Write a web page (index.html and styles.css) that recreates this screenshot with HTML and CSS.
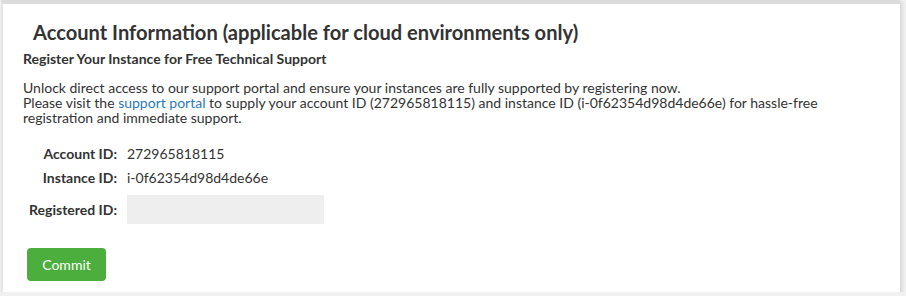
FILE: index.html
```html
<!DOCTYPE html>
<html lang="en">
<head>
    <meta charset="UTF-8">
    <title>Account Information</title>
    <link rel="stylesheet" href="styles.css">
</head>
<body>
    <div class="panel">
        <h2 class="panel-title">Account Information (applicable for cloud environments only)</h2>
        <h4 class="panel-subtitle">Register Your Instance for Free Technical Support</h4>
        <p class="panel-text">
            Unlock direct access to our support portal and ensure your instances are fully supported by registering now.<br>
            Please visit the <a href="#">support portal</a> to supply your account ID (272965818115) and instance ID (i-0f62354d98d4de66e) for hassle-free registration and immediate support.
        </p>

        <div class="form">
            <div class="form-row">
                <label class="form-label">Account ID:</label>
                <div class="form-value">272965818115</div>
            </div>
            <div class="form-row">
                <label class="form-label">Instance ID:</label>
                <div class="form-value">i-0f62354d98d4de66e</div>
            </div>
            <div class="form-row form-row-input">
                <label class="form-label" for="registeredId">Registered ID:</label>
                <input type="text" id="registeredId" class="form-input">
            </div>
        </div>

        <button class="btn-commit">Commit</button>
    </div>
</body>
</html>
```

FILE: styles.css
```css
* {
    margin: 0;
    padding: 0;
    box-sizing: border-box;
}

body {
    background-color: #f1f1f1;
    font-family: Lato, "Liberation Sans", sans-serif;
    color: #333;
    font-size: 14px;
}

.panel {
    height: 292px;
    margin: 0 6px 0 1px;
    background: white;
    border-top: 4px solid #dcdcdc;
    border-left: 2px solid #e6e6e6;
    box-shadow: 2px 2px 4px rgba(0, 0, 0, 0.12);
    padding: 0 20px 0 20px;
}

.panel-title {
    font-size: 20.1px;
    font-weight: 700;
    color: #333;
    padding: 16px 0 0 10px;
    line-height: 24px;
}

.panel-subtitle {
    font-size: 14px;
    font-weight: 700;
    margin-top: 7px;
    line-height: 16px;
}

.panel-text {
    margin-top: 13px;
    line-height: 15px;
}

.panel-text a {
    color: #2a7ab8;
    text-decoration: none;
}

.form {
    margin-top: 16px;
}

.form-row {
    display: flex;
    align-items: center;
    gap: 10px;
    height: 24px;
}

.form-row-input {
    height: 30px;
    margin-top: 5px;
}

.form-label {
    width: 94px;
    text-align: right;
    font-weight: 700;
}

.form-input {
    width: 197px;
    height: 29px;
    border: none;
    background: #eeeeee;
    outline: none;
}

.btn-commit {
    margin: 24px 0 0 4px;
    background-color: #4cae3c;
    color: white;
    border: none;
    border-radius: 4px;
    width: 79px;
    height: 33px;
    font-family: Lato, "Liberation Sans", sans-serif;
    font-size: 14px;
    cursor: pointer;
}
```
